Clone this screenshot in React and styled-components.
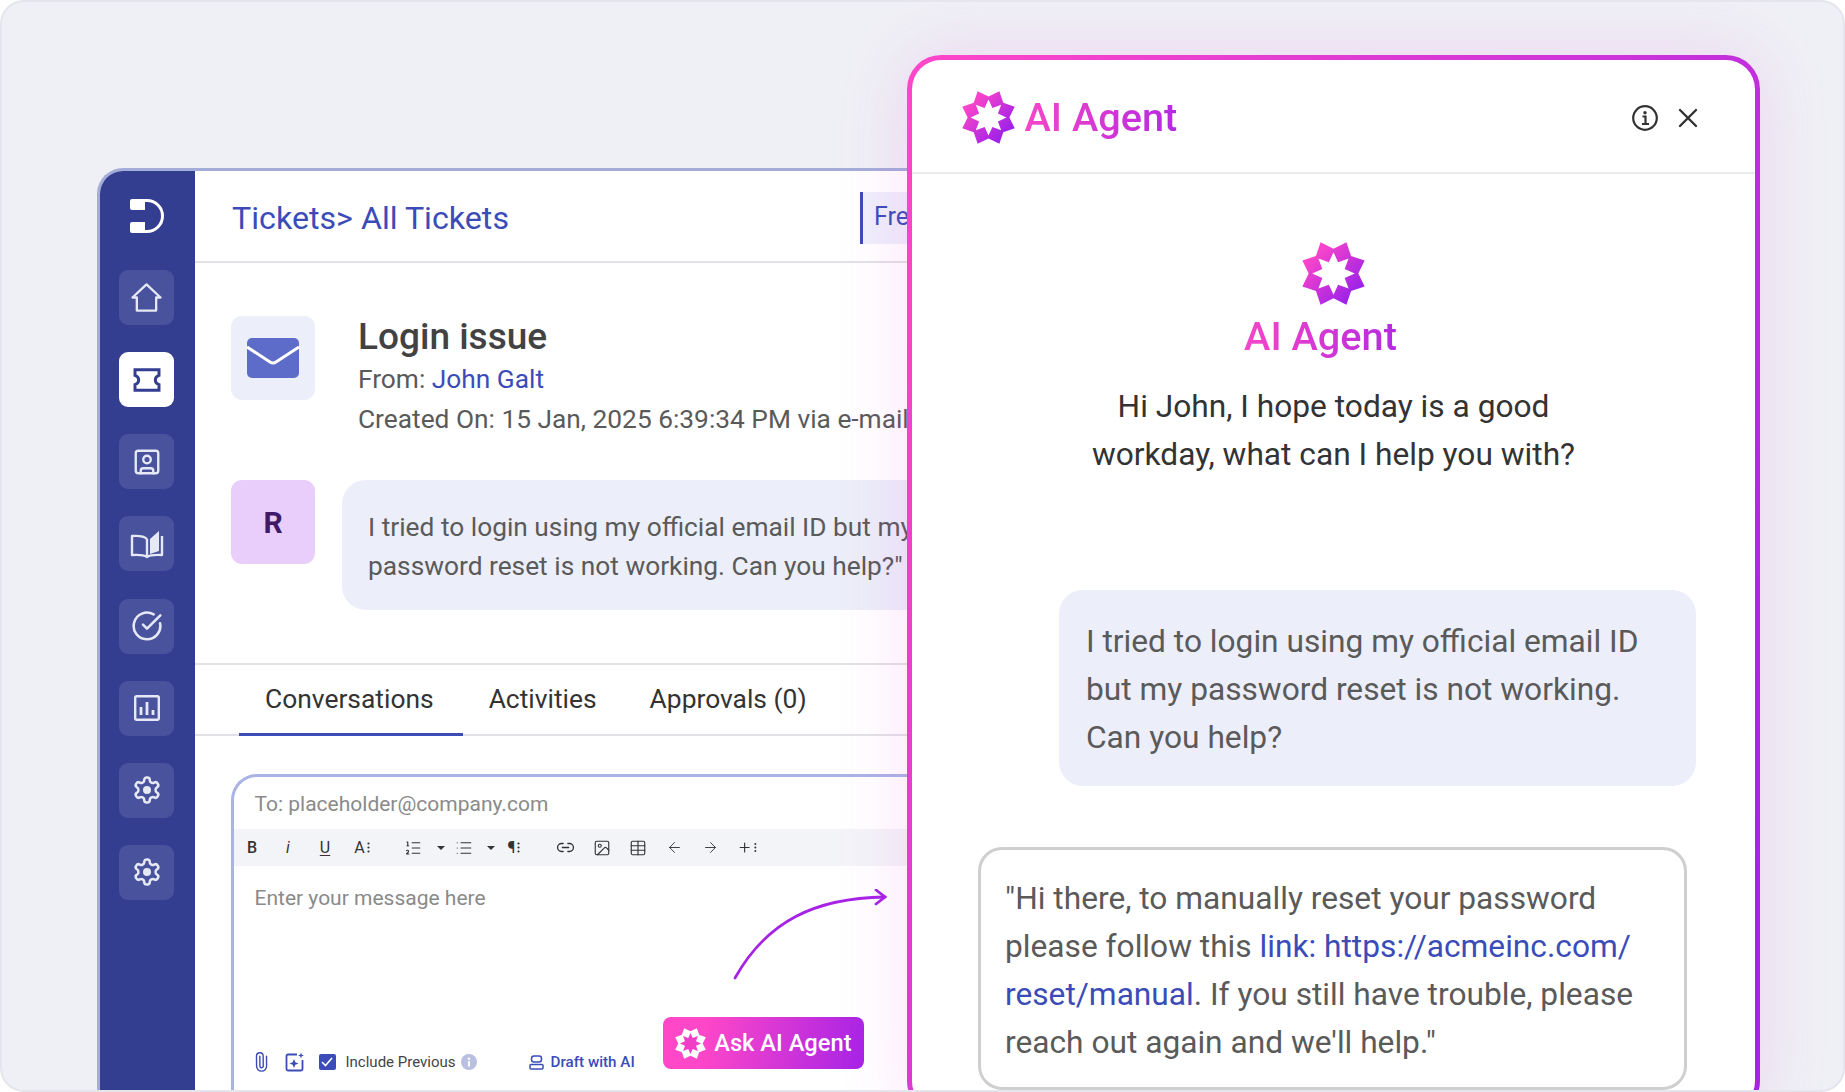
import React from 'react';
import styled, { createGlobalStyle } from 'styled-components';
import { X, ListOrdered, List, Link2, Table, ArrowLeft, ArrowRight, Plus, Paperclip, SquareUser, CircleCheckBig, Image as ImageIcon } from 'lucide-react';

const GlobalStyle = createGlobalStyle`
   html, body {
      margin: 0;
      padding: 0;
      background: #fff;
   }
   * {
      box-sizing: border-box;
   }
`

const Page = styled.div`
   position: relative;
   width: 1845px;
   height: 1092px;
   padding: 168px 0 0 97px;
   overflow: hidden;
   background: #eff0f5;
   border: 2px solid #e4e5ed;
   border-radius: 24px;
   font-family: Roboto, "Liberation Sans", sans-serif;
   margin: 0;
`

const Window = styled.div`
   display: flex;
   margin: -2px 0 0 -2px;
   width: 903px;
   height: 960px;
   background: #fff;
   border-top: 3px solid #a4add9;
   border-left: 3px solid #a4add9;
   border-top-left-radius: 26px;
   overflow: hidden;
`

const Sidebar = styled.nav`
   display: flex;
   flex-direction: column;
   align-items: center;
   flex: none;
   width: 95px;
   background: #333e91;
   padding: 27px 2px 0 0;
`

const LogoWrap = styled.div`
   height: 72px;
`

const NavButton = styled.div`
   display: flex;
   align-items: center;
   justify-content: center;
   width: 55px;
   height: 55px;
   margin-bottom: 27.15px;
   border-radius: 9px;
   color: ${p => (p.$active ? '#333e91' : '#e6e8f5')};
   background: ${p => (p.$active ? '#fff' : '#48529d')};
`

const Main = styled.div`
   flex: 1;
   min-width: 0;
`

const Header = styled.header`
   display: flex;
   align-items: center;
   justify-content: space-between;
   height: 92px;
   padding: 3px 0 0 37px;
   border-bottom: 2px solid #e2e2e6;
`

const Breadcrumb = styled.div`
   font-size: 32.2px;
   color: #3b4cb8;
`

const PlanTag = styled.div`
   width: 140px;
   height: 52px;
   padding-left: 11px;
   line-height: 50px;
   font-size: 25px;
   color: #3b4cb8;
   background: #efeffb;
   border-left: 3px solid #3b4cb8;
`

const Ticket = styled.section`
   padding: 53px 0 0 36px;
   height: 400px;
`

const TicketRow = styled.div`
   display: flex;
   gap: ${p => p.$gap}px;
   margin-bottom: ${p => p.$mb || 0}px;
   white-space: nowrap;
`

const IconBox = styled.div`
   display: flex;
   align-items: center;
   justify-content: center;
   flex: none;
   width: 84px;
   height: 84px;
   border-radius: 11px;
   background: ${p => (p.$tone === 'lilac' ? '#e9cdfb' : '#eceef9')};
   color: #3f1a66;
   font-size: 30px;
   font-weight: 700;
`

const TicketTitle = styled.h1`
   margin: 0;
   height: 43px;
   line-height: 42px;
   font-size: 37px;
   font-weight: 500;
   color: #424242;
`

const MetaLine = styled.div`
   line-height: 40px;
   font-size: 26.3px;
   color: #5a5a5a;

   a {
      color: #3b4cb8;
   }
`

const TicketBubble = styled.div`
   width: 620px;
   height: 130px;
   padding: 28px 0 0 26px;
   border-radius: 24px;
   background: #eceef9;
   line-height: 39px;
   font-size: 26.3px;
   color: #5a5a5a;
`

const Tabs = styled.div`
   display: flex;
   height: 73px;
   padding-left: 44px;
   border-top: 2px solid #e2e2e6;
   border-bottom: 2px solid #e2e2e6;
`

const Tab = styled.div`
   display: flex;
   align-items: center;
   height: 71px;
   padding: 0 ${p => (p.$active ? 29 : 27)}px 0 26px;
   font-size: 26.4px;
   color: #333;
   border-bottom: 3px solid ${p => (p.$active ? '#3b4cb8' : 'transparent')};
`

const Composer = styled.div`
   position: relative;
   margin: 38px 0 0 36px;
   width: 780px;
   height: 400px;
   border: 3px solid #a9b3e6;
   border-right: 0;
   border-top-left-radius: 26px;
`

const ToLine = styled.div`
   height: 52px;
   padding: 14px 0 0 20.5px;
   font-size: 21px;
   line-height: 26px;
   color: #8a8a8a;
`

const Toolbar = styled.div`
   display: flex;
   align-items: center;
   height: 37px;
   background: #f3f4f8;
   color: #333;
`

const Tool = styled.span`
   display: flex;
   align-items: center;
   justify-content: center;
   flex: none;
   width: 20px;
   margin-left: ${p => p.$ml}px;
   font-size: 16px;
   font-weight: ${p => p.$weight || 400};
   font-style: ${p => (p.$italic ? 'italic' : 'normal')};
   text-decoration: ${p => (p.$under ? 'underline' : 'none')};
   text-underline-offset: 2px;
`

const Caret = styled.span`
   flex: none;
   width: 0;
   height: 0;
   margin-left: ${p => p.$ml}px;
   border-left: 4px solid transparent;
   border-right: 4px solid transparent;
   border-top: 4px solid #333;
`

const MessageBody = styled.div`
   height: 151px;
   padding: 20px 0 0 20.5px;
   line-height: 24px;
   font-size: 21px;
   color: #8a8a8a;
`

const ComposerFooter = styled.div`
   display: flex;
   align-items: flex-end;
   padding-left: 20px;
`

const FooterIcons = styled.div`
   display: flex;
   align-items: center;
   height: 22px;
   margin: 0 0 -4px -3px;
   color: #3b4cb8;
   font-size: 15px;
`

const CheckBox = styled.span`
   display: flex;
   align-items: center;
   justify-content: center;
   width: 17px;
   height: 16px;
   margin: 0 10px 0 14px;
   border-radius: 2px;
   background: #3b4cb8;
   color: #fff;
`

const IncludeLabel = styled.span`
   color: #444;
   margin-right: 5px;
`

const DraftLink = styled.span`
   display: flex;
   align-items: center;
   gap: 7px;
   margin-left: 52px;
   font-size: 15.2px;
   font-weight: 500;
   color: #3b4cb8;
`

const AskButton = styled.button`
   display: flex;
   align-items: center;
   gap: 8px;
   width: 201px;
   height: 52px;
   margin-left: 28px;
   padding: 0 0 0 12.5px;
   border: 0;
   border-radius: 8px;
   background: linear-gradient(100deg, #ff47c8 20%, #a623e6 100%);
   color: #fff;
   font-family: inherit;
   font-size: 23.7px;
   font-weight: 500;
`

const CurveArrow = styled.svg`
   position: absolute;
   left: 497px;
   top: 112px;
`

const Panel = styled.aside`
   position: absolute;
   left: 905px;
   top: 53px;
   width: 853px;
   height: 1060px;
   border: 5px solid transparent;
   border-radius: 34px;
   background: linear-gradient(#fff, #fff) padding-box, linear-gradient(115deg, #ff47c8 0%, #a623e6 92%) border-box;
   box-shadow: 0 0 70px rgba(225, 70, 225, 0.16);
`

const PanelHeader = styled.div`
   display: flex;
   align-items: center;
   height: 114px;
   padding: 3px 51px 0 50px;
   border-bottom: 2px solid #ececee;
   color: #333;
`

const GradientText = styled.span`
   background: linear-gradient(90deg, #f546c8, #b52ae0);
   -webkit-background-clip: text;
   background-clip: text;
   color: transparent;
   font-size: 39.7px;
   font-weight: 500;
`

const PanelTitle = styled.div`
   display: flex;
   align-items: center;
   gap: 9.5px;
   flex: 1;
`

const HeaderActions = styled.div`
   display: flex;
   align-items: center;
   gap: 14px;
`

const Intro = styled.div`
   display: flex;
   flex-direction: column;
   align-items: center;
   padding-top: 68px;
   height: 416px;
`

const IntroTitle = styled.div`
   margin: 8px 26px 0 0;
   line-height: 48px;
`

const Greeting = styled.p`
   margin: 14px 0 0;
   text-align: center;
   font-size: 31.7px;
   line-height: 48px;
   color: #333;
`

const UserBubble = styled.div`
   margin-left: 147px;
   width: 637px;
   height: 196px;
   padding: 28px 0 0 27px;
   border-radius: 24px;
   background: #eceef9;
   font-size: 31.7px;
   line-height: 48px;
   color: #5a5a5a;
`

const AgentBubble = styled.div`
   margin: 61px 0 0 66px;
   width: 709px;
   height: 243px;
   padding: 25px 0 0 24px;
   border: 3px solid #cfcfcf;
   border-radius: 24px;
   font-size: 31.7px;
   line-height: 48px;
   color: #5a5a5a;

   a {
      color: #3b4cb8;
   }
`

// 8 point badge: outer ring with notches and a star cut out of the middle
function starPoints(peak, notch, offset) {
   const pts = [];
   for (let i = 0; i < 16; i++) {
      const r = i % 2 === 0 ? peak : notch;
      const a = ((offset + i * 22.5 - 90) * Math.PI) / 180;
      pts.push(`${(r * Math.cos(a)).toFixed(1)},${(r * Math.sin(a)).toFixed(1)}`);
   }
   return pts.join(' ');
}

function AgentLogo({ size, id, outer, inner }) {
   return (
      <svg width={size} height={size} viewBox="-99 -99 198 198">
         <defs>
            <linearGradient id={id} x1="0" y1="0" x2="1" y2="1">
               <stop offset="0.15" stopColor="#ff47c8" />
               <stop offset="0.85" stopColor="#9a20ea" />
            </linearGradient>
         </defs>
         <polygon points={starPoints(106, 78, 22.5)} fill={outer || `url(#${id})`} />
         <polygon points={starPoints(67, 38, 0)} fill={inner || '#fff'} />
      </svg>
   )
}

function BrandLogo() {
   return (
      <svg width="36" height="36" viewBox="0 0 36 36" fill="none">
         <path d="M1 3a2 2 0 0 1 2-2h13v11H3a2 2 0 0 1-2-2zM1 26a2 2 0 0 1 2-2h13v11H3a2 2 0 0 1-2-2z" fill="#fff" />
         <path d="M16 2.5h2a15.5 15.5 0 0 1 0 31h-2" stroke="#fff" strokeWidth="3" />
      </svg>
   )
}

function HomeIcon() {
   return (
      <svg width="31" height="29" viewBox="0 0 32 30" fill="none" stroke="currentColor" strokeWidth="2.4">
         <path d="M1.5 15 16 1.5 30.5 15H26v13.5H6V15z" strokeLinejoin="round" />
      </svg>
   )
}

function TicketIcon() {
   return (
      <svg width="28" height="24" viewBox="0 0 30 26" fill="none" stroke="currentColor" strokeWidth="3.2">
         <path d="M2 2h26v6c-3 1-4 3-4 5s1 4 4 5v6H2v-6c3-1 4-3 4-5s-1-4-4-5z" />
      </svg>
   )
}

function BookIcon() {
   return (
      <svg width="34" height="30" viewBox="0 0 34 30" fill="none" stroke="currentColor" strokeWidth="2.4">
         <path d="M17 10c-3-3-8-3.5-15-3v19c7-.5 12 0 15 2 3-2 8-2.5 15-2V7" strokeLinejoin="round" />
         <path d="M17 10v18" />
         <path d="M20 10 29 2v20l-9 3z" fill="currentColor" stroke="none" />
      </svg>
   )
}

function ChartIcon() {
   return (
      <svg width="26" height="26" viewBox="0 0 26 26" fill="none" stroke="currentColor">
         <rect x="1.2" y="1.2" width="23.6" height="23.6" rx="1.5" strokeWidth="2.4" />
         <path d="M7 12v8M13 7v13M19 15v5" strokeWidth="2.8" />
      </svg>
   )
}

function GearIcon() {
   return (
      <svg width="30" height="30" viewBox="0 0 24 24" fill="none" stroke="currentColor" strokeWidth="2">
         <path d="M12.22 2h-.44a2 2 0 0 0-2 2v.18a2 2 0 0 1-1 1.73l-.43.25a2 2 0 0 1-2 0l-.15-.08a2 2 0 0 0-2.73.73l-.22.38a2 2 0 0 0 .73 2.73l.15.1a2 2 0 0 1 1 1.72v.51a2 2 0 0 1-1 1.74l-.15.09a2 2 0 0 0-.73 2.73l.22.38a2 2 0 0 0 2.73.73l.15-.08a2 2 0 0 1 2 0l.43.25a2 2 0 0 1 1 1.73V20a2 2 0 0 0 2 2h.44a2 2 0 0 0 2-2v-.18a2 2 0 0 1 1-1.73l.43-.25a2 2 0 0 1 2 0l.15.08a2 2 0 0 0 2.73-.73l.22-.39a2 2 0 0 0-.73-2.73l-.15-.08a2 2 0 0 1-1-1.74v-.5a2 2 0 0 1 1-1.74l.15-.09a2 2 0 0 0 .73-2.73l-.22-.38a2 2 0 0 0-2.73-.73l-.15.08a2 2 0 0 1-2 0l-.43-.25a2 2 0 0 1-1-1.73V4a2 2 0 0 0-2-2z" />
         <circle cx="12" cy="12" r="3.2" fill="currentColor" stroke="none" />
      </svg>
   )
}

function EnvelopeIcon() {
   return (
      <svg width="52" height="40" viewBox="0 0 52 40" fill="none">
         <rect width="52" height="40" rx="5" fill="#5d6cc8" />
         <path d="M0 9 23 24c2 1.3 4 1.3 6 0L52 9" stroke="#fff" strokeWidth="3" />
      </svg>
   )
}

function MoreDots() {
   return (
      <svg width="3" height="11" viewBox="0 0 3 11" fill="#333" style={{ marginLeft: 2 }}>
         <circle cx="1.5" cy="1.5" r="1.1" />
         <circle cx="1.5" cy="5.5" r="1.1" />
         <circle cx="1.5" cy="9.5" r="1.1" />
      </svg>
   )
}

function SparkImageIcon() {
   return (
      <svg width="20" height="20" viewBox="0 0 20 20" fill="none" stroke="currentColor" strokeWidth="1.8">
         <path d="M12 2.5H3A1.5 1.5 0 0 0 1.5 4v13A1.5 1.5 0 0 0 3 18.5h13a1.5 1.5 0 0 0 1.5-1.5V8" />
         <path d="M9 7l1.3 3.2 3.2 1.3-3.2 1.3L9 16l-1.3-3.2-3.2-1.3 3.2-1.3zM16 .5l.8 2.2 2.2.8-2.2.8-.8 2.2-.8-2.2-2.2-.8 2.2-.8z" fill="currentColor" stroke="none" />
      </svg>
   )
}

function SmallInfo() {
   return (
      <svg width="16" height="16" viewBox="0 0 16 16">
         <circle cx="8" cy="8" r="8" fill="#b9bfe0" />
         <rect x="7" y="7" width="2" height="5.5" fill="#fff" />
         <circle cx="8" cy="4.8" r="1.2" fill="#fff" />
      </svg>
   )
}

function RobotIcon() {
   return (
      <svg width="15" height="15" viewBox="0 0 15 15" fill="none" stroke="currentColor" strokeWidth="1.5">
         <rect x="2.5" y="1" width="10" height="6" rx="2.5" />
         <rect x="1" y="9.5" width="13" height="4.5" rx="1" />
         <path d="M5.5 4h.01M9.5 4h.01" strokeWidth="2" />
      </svg>
   )
}

function InfoBadge() {
   return (
      <svg width="26" height="26" viewBox="0 0 26 26" fill="none" stroke="#333">
         <circle cx="13" cy="13" r="11.8" strokeWidth="2.2" />
         <circle cx="13" cy="7.8" r="1.7" fill="#333" stroke="none" />
         <path d="M10.5 11.5H13.5V18.5M10 19h7" strokeWidth="2.2" />
      </svg>
   )
}

const navItems = [
   <HomeIcon />,
   <TicketIcon />,
   <SquareUser size={30} strokeWidth={1.9} />,
   <BookIcon />,
   <CircleCheckBig size={32} strokeWidth={1.9} />,
   <ChartIcon />,
   <GearIcon />,
   <GearIcon />,
]

function App() {
   return (
      <Page>
         <GlobalStyle />
         <Window>
            <Sidebar>
               <LogoWrap><BrandLogo /></LogoWrap>
               {navItems.map((icon, i) => (
                  <NavButton key={i} $active={i === 1}>{icon}</NavButton>
               ))}
            </Sidebar>
            <Main>
               <Header>
                  <Breadcrumb>Tickets&gt; All Tickets</Breadcrumb>
                  <PlanTag>Fre</PlanTag>
               </Header>
               <Ticket>
                  <TicketRow $gap={43} $mb={41}>
                     <IconBox><EnvelopeIcon /></IconBox>
                     <div>
                        <TicketTitle>Login issue</TicketTitle>
                        <MetaLine>From: <a>John Galt</a></MetaLine>
                        <MetaLine>Created On: 15 Jan, 2025 6:39:34 PM via e-mail</MetaLine>
                     </div>
                  </TicketRow>
                  <TicketRow $gap={27}>
                     <IconBox $tone="lilac">R</IconBox>
                     <TicketBubble>
                        I tried to login using my official email ID but my<br />
                        password reset is not working. Can you help?"
                     </TicketBubble>
                  </TicketRow>
               </Ticket>
               <Tabs>
                  <Tab $active>Conversations</Tab>
                  <Tab>Activities</Tab>
                  <Tab>Approvals (0)</Tab>
               </Tabs>
               <Composer>
                  <ToLine>To: placeholder@company.com</ToLine>
                  <Toolbar>
                     <Tool $ml={8} $weight={500}>B</Tool>
                     <Tool $ml={16} $italic>i</Tool>
                     <Tool $ml={17} $under>U</Tool>
                     <Tool $ml={17}>A<MoreDots /></Tool>
                     <Tool $ml={31}><ListOrdered size={18} strokeWidth={1.5} /></Tool>
                     <Caret $ml={14} />
                     <Tool $ml={9}><List size={18} strokeWidth={1.5} /></Tool>
                     <Caret $ml={13} />
                     <Tool $ml={9}>¶<MoreDots /></Tool>
                     <Tool $ml={31}><Link2 size={19} strokeWidth={1.7} /></Tool>
                     <Tool $ml={17}><ImageIcon size={18} strokeWidth={1.5} /></Tool>
                     <Tool $ml={16}><Table size={18} strokeWidth={1.5} /></Tool>
                     <Tool $ml={16}><ArrowLeft size={17} strokeWidth={1.3} /></Tool>
                     <Tool $ml={16}><ArrowRight size={17} strokeWidth={1.3} /></Tool>
                     <Tool $ml={17}><Plus size={17} strokeWidth={1.8} /><MoreDots /></Tool>
                  </Toolbar>
                  <MessageBody>Enter your message here</MessageBody>
                  <ComposerFooter>
                     <FooterIcons>
                        <Paperclip size={20} strokeWidth={1.7} style={{ transform: 'rotate(-45deg)', marginRight: 13.5 }} />
                        <SparkImageIcon />
                        <CheckBox>
                           <svg width="12" height="10" viewBox="0 0 12 10" fill="none" stroke="#fff" strokeWidth="1.6"><path d="M1 5l3.5 3.5L11 1" /></svg>
                        </CheckBox>
                        <IncludeLabel>Include Previous</IncludeLabel>
                        <SmallInfo />
                        <DraftLink><RobotIcon />Draft with AI</DraftLink>
                     </FooterIcons>
                     <AskButton>
                        <AgentLogo size={31} id="agent-btn" outer="#fff" inner="#f03fc6" />
                        Ask AI Agent
                     </AskButton>
                  </ComposerFooter>
                  <CurveArrow width="162" height="92" viewBox="0 0 162 92" fill="none" stroke="#a623e6" strokeWidth="2.8" strokeLinecap="round">
                     <path d="M4 89C36 32 84 9 154 8" />
                     <path d="M145 1l9 7-9 7" />
                  </CurveArrow>
               </Composer>
            </Main>
         </Window>
         <Panel>
            <PanelHeader>
               <PanelTitle>
                  <AgentLogo size={53} id="agent-head" />
                  <GradientText>AI Agent</GradientText>
               </PanelTitle>
               <HeaderActions>
                  <InfoBadge />
                  <X size={32} strokeWidth={1.8} />
               </HeaderActions>
            </PanelHeader>
            <Intro>
               <AgentLogo size={63} id="agent-intro" />
               <IntroTitle><GradientText>AI Agent</GradientText></IntroTitle>
               <Greeting>
                  Hi John, I hope today is a good<br />
                  workday, what can I help you with?
               </Greeting>
            </Intro>
            <UserBubble>
               I tried to login using my official email ID<br />
               but my password reset is not working.<br />
               Can you help?
            </UserBubble>
            <AgentBubble>
               "Hi there, to manually reset your password<br />
               please follow this <a>link: https://acmeinc.com/<br />
               reset/manual</a>. If you still have trouble, please<br />
               reach out again and we'll help."
            </AgentBubble>
         </Panel>
      </Page>
   )
}

export default App
